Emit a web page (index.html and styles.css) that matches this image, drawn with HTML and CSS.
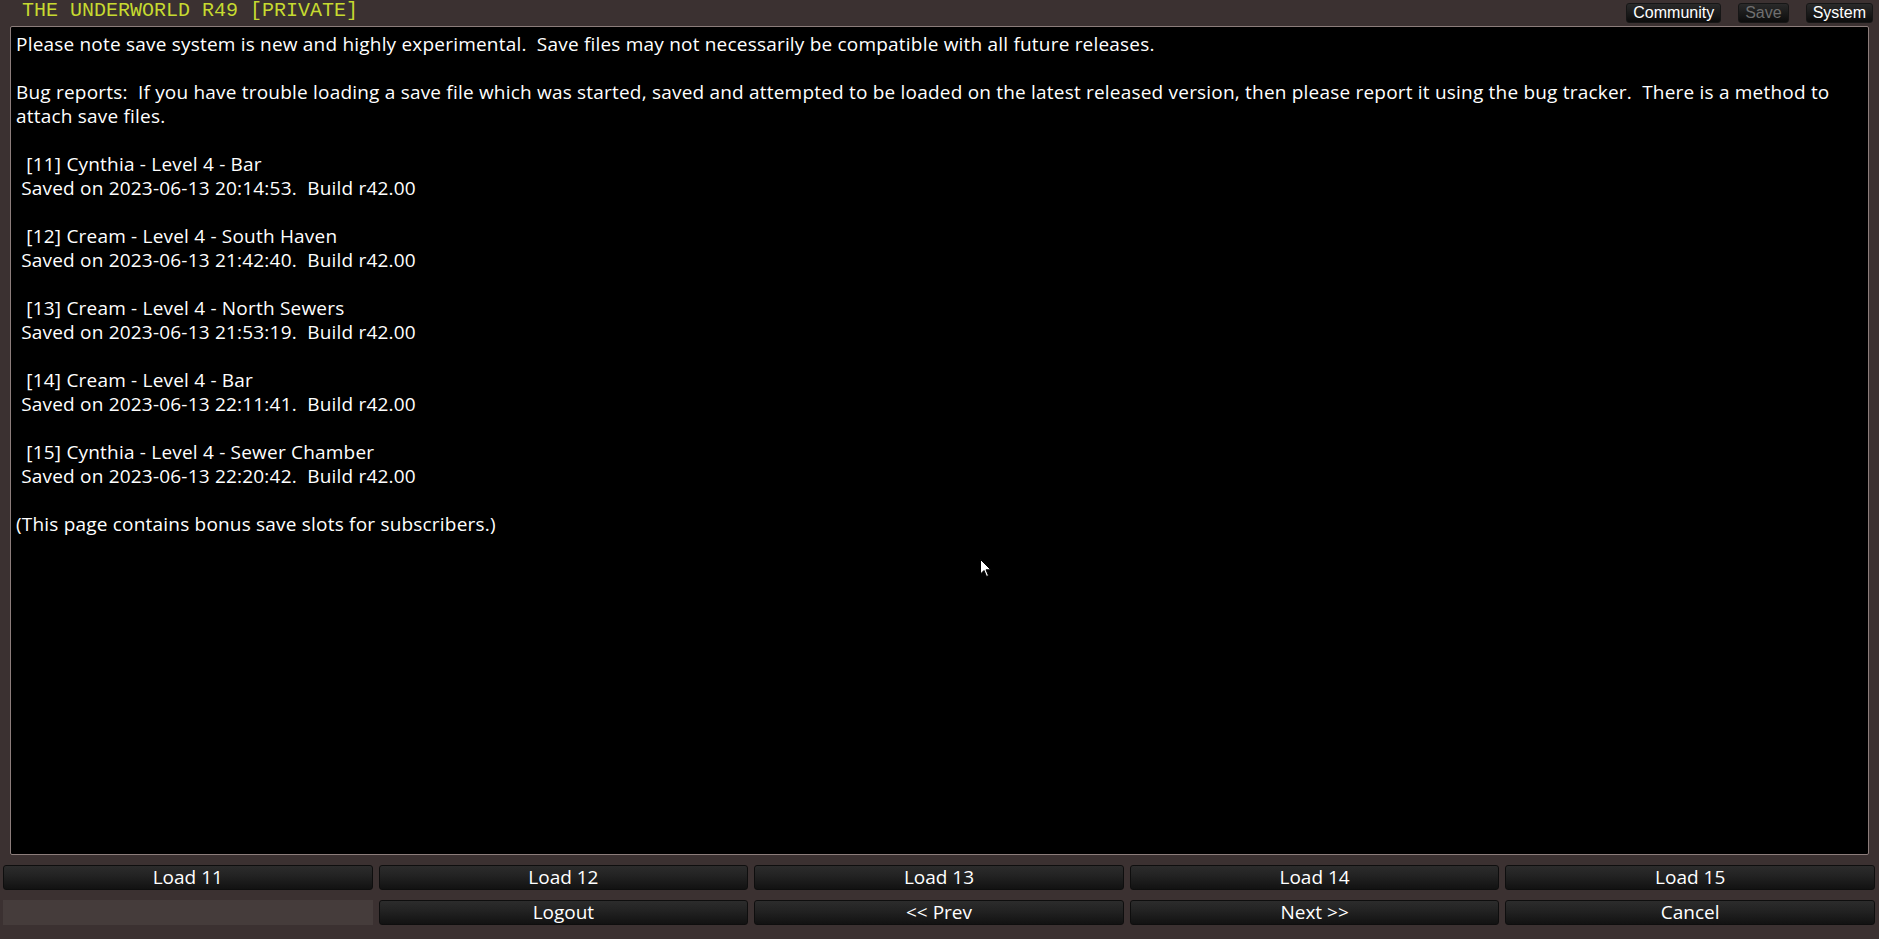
FILE: index.html
```html
<!DOCTYPE html>
<html>
    <head>
        <title>The Underworld - Load</title>
        <meta charset="UTF-8">
        <link rel="stylesheet" href="styles.css">
    </head>
    <body>
        <div class="topbar">
            <div class="gametitle">THE UNDERWORLD R49 [PRIVATE]</div>
            <div class="topmenu">
                <a class="topbtn" href="#">Community</a>
                <a class="topbtn disabled" href="#">Save</a>
                <a class="topbtn" href="#">System</a>
            </div>
        </div>

        <div class="mainbox">
<div class="story">Please note save system is new and highly experimental.  Save files may not necessarily be compatible with all future releases.

Bug reports:  If you have trouble loading a save file which was started, saved and attempted to be loaded on the latest released version, then please report it using the bug tracker.  There is a method to attach save files.

  [11] Cynthia - Level 4 - Bar
 Saved on 2023-06-13 20:14:53.  Build r42.00

  [12] Cream - Level 4 - South Haven
 Saved on 2023-06-13 21:42:40.  Build r42.00

  [13] Cream - Level 4 - North Sewers
 Saved on 2023-06-13 21:53:19.  Build r42.00

  [14] Cream - Level 4 - Bar
 Saved on 2023-06-13 22:11:41.  Build r42.00

  [15] Cynthia - Level 4 - Sewer Chamber
 Saved on 2023-06-13 22:20:42.  Build r42.00

(This page contains bonus save slots for subscribers.)</div>
        </div>

        <div class="choices">
            <a class="choice" href="#">Load 11</a>
            <a class="choice" href="#">Load 12</a>
            <a class="choice" href="#">Load 13</a>
            <a class="choice" href="#">Load 14</a>
            <a class="choice" href="#">Load 15</a>
            <div class="choice empty"></div>
            <a class="choice" href="#">Logout</a>
            <a class="choice" href="#">&lt;&lt; Prev</a>
            <a class="choice" href="#">Next &gt;&gt;</a>
            <a class="choice" href="#">Cancel</a>
        </div>

        <svg class="pointer" width="12" height="19" viewBox="0 0 12 19">
            <path d="M0.5 0.5 L0.5 15 L4 11.5 L6.5 17.5 L8.5 16.6 L6 10.8 L10.8 10.8 Z" fill="#fff" stroke="#000" stroke-width="1"/>
        </svg>
    </body>
</html>
```
FILE: styles.css
```css
html, body
{
    margin: 0;
    height: 100%;
}
body
{
    background-color: #3b3131;
    display: flex;
    flex-direction: column;
    font-family: "Open Sans", "Noto Sans", sans-serif;
    color: #fff;
    overflow: hidden;
    position: relative;
}
a
{
    text-decoration: none;
}

/* title strip */
.topbar
{
    height: 26px;
    display: flex;
    justify-content: space-between;
    align-items: flex-start;
}
.gametitle
{
    font-family: "Liberation Mono", monospace;
    font-size: 20px;
    line-height: 22px;
    color: #c6da30;
    padding-left: 22px;
}
.topmenu
{
    display: flex;
    gap: 17px;
    padding: 3px 6px 0 0;
}
.topbtn
{
    font-family: "Liberation Sans", Arial, sans-serif;
    font-size: 16px;
    line-height: 18px;
    height: 18px;
    padding: 0 6px;
    color: #fff;
    background: linear-gradient(#2a2a2a, #0c0c0c);
    border: 1px solid #161616;
    border-radius: 3px;
}
.topbtn.disabled
{
    color: #6f6f6f;
}

/* story text */
.mainbox
{
    flex: 1;
    margin: 0 10px;
    background: #000;
    border: 1px solid #8c7d7b;
    border-radius: 2px;
    padding: 5px 5px;
}
.story
{
    white-space: pre-wrap;
    font-size: 19px;
    line-height: 24px;
    letter-spacing: 0.2px;
}

/* choice buttons */
.choices
{
    display: grid;
    grid-template-columns: repeat(5, 1fr);
    grid-auto-rows: 25px;
    column-gap: 6px;
    row-gap: 10px;
    padding: 10px 4px 14px 3px;
}
.choice
{
    display: block;
    text-align: center;
    font-size: 19px;
    line-height: 23px;
    color: #fff;
    background: linear-gradient(#2c2c2c, #232323 40%, #121212);
    border: 1px solid #0e0e0e;
    border-radius: 3px;
}
.choice.empty
{
    background: #453c3b;
    border: none;
    border-radius: 0;
}

.pointer
{
    position: absolute;
    left: 980px;
    top: 559px;
}
```
